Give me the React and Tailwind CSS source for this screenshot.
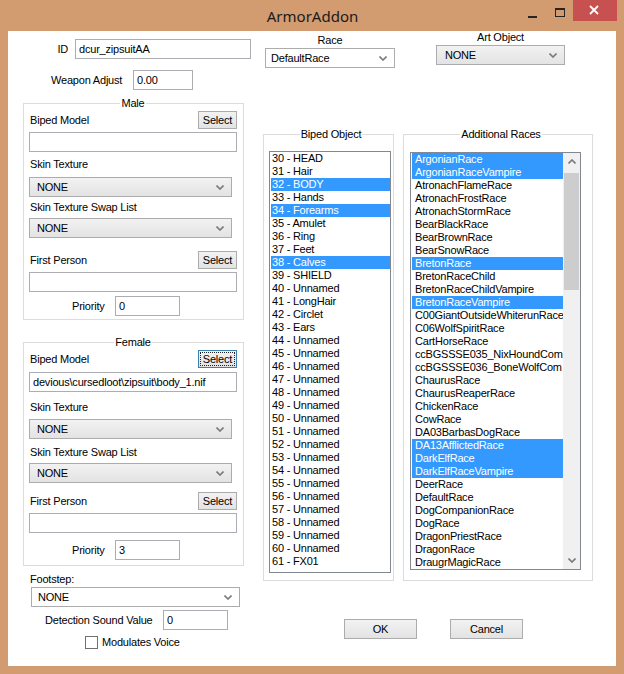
import React from 'react';

const FONT = "font-['Liberation_Sans',Arial,sans-serif] text-[11px] leading-[13px] tracking-[-0.2px] text-black";

const bipedItems = [
  '30 - HEAD', '31 - Hair', '32 - BODY', '33 - Hands', '34 - Forearms', '35 - Amulet',
  '36 - Ring', '37 - Feet', '38 - Calves', '39 - SHIELD', '40 - Unnamed', '41 - LongHair',
  '42 - Circlet', '43 - Ears',
  ...Array.from({ length: 17 }, (_, i) => `${44 + i} - Unnamed`),
  '61 - FX01',
];
const bipedSelected = [2, 4, 8];

const races = [
  'ArgonianRace', 'ArgonianRaceVampire', 'AtronachFlameRace', 'AtronachFrostRace',
  'AtronachStormRace', 'BearBlackRace', 'BearBrownRace', 'BearSnowRace', 'BretonRace',
  'BretonRaceChild', 'BretonRaceChildVampire', 'BretonRaceVampire', 'C00GiantOutsideWhiterunRace',
  'C06WolfSpiritRace', 'CartHorseRace', 'ccBGSSSE035_NixHoundCom', 'ccBGSSSE036_BoneWolfCom',
  'ChaurusRace', 'ChaurusReaperRace', 'ChickenRace', 'CowRace', 'DA03BarbasDogRace',
  'DA13AfflictedRace', 'DarkElfRace', 'DarkElfRaceVampire', 'DeerRace', 'DefaultRace',
  'DogCompanionRace', 'DogRace', 'DragonPriestRace', 'DragonRace', 'DraugrMagicRace',
];
const racesSelected = [0, 1, 8, 11, 22, 23, 24];

const Chevron = ({ up = false }) => (
  <svg width="8" height="5" viewBox="0 0 8 5">
    <path d={up ? 'M0.5 4.5 L4 1 L7.5 4.5' : 'M0.5 0.5 L4 4 L7.5 0.5'} fill="none" stroke="#7a7a7a" strokeWidth="1.6" />
  </svg>
);

// minimize / maximize / close caption buttons
const CaptionButtons = () => (
  <svg width="96" height="21" viewBox="0 0 96 21" className="shrink-0">
    <rect x="7" y="16" width="9" height="2" fill="#252525" />
    <rect x="34.5" y="8.5" width="9" height="8" fill="none" stroke="#252525" strokeWidth="1" />
    <rect x="34" y="8" width="10" height="2" fill="#252525" />
    <rect x="52" y="0" width="44" height="21" fill="#c75050" />
    <path d="M69 6 L77 14 M77 6 L69 14" stroke="#ffffff" strokeWidth="1.8" />
  </svg>
);

const WinButton = ({ label, className = '', focused = false }) => (
  <div
    className={`flex items-center justify-center border bg-linear-to-b from-[#f2f2f2] to-[#e3e3e3] ${
      focused ? 'border-[#3c7fb1]' : 'border-[#acacac]'
    } ${className}`}
  >
    {focused ? (
      <span className="flex flex-1 self-stretch items-center justify-center m-[1px] border border-dotted border-[#222]">
        {label}
      </span>
    ) : (
      label
    )}
  </div>
);

const TextBox = ({ value = '', className = '' }) => (
  <div className={`flex items-center h-[20px] border border-[#abadb3] bg-white px-[3px] overflow-hidden whitespace-nowrap ${className}`}>
    {value}
  </div>
);

const Combo = ({ value, className = '', white = false }) => (
  <div
    className={`flex items-center justify-between border border-[#acacac] ${
      white ? 'bg-white' : 'bg-linear-to-b from-[#f2f2f2] to-[#e3e3e3]'
    } ${className}`}
  >
    <span>{value}</span>
    <span className="mr-[7px] flex">
      <Chevron />
    </span>
  </div>
);

// male / female share the layout, only the spacing differs a little
const GenderBox = ({ title, model = '', priority, focused = false, gaps, className = '' }) => (
  <fieldset className={`w-[221px] border border-[#dcdcdc] pl-[5px] pr-[6px] ${gaps.pb} ${className}`}>
    <legend className="mx-auto px-[1px]">{title}</legend>
    <div className="flex items-center justify-between h-[18px] mt-[1px]">
      <span className="pl-[1px]">Biped Model</span>
      <WinButton label="Select" focused={focused} className="w-[39px] h-[18px]" />
    </div>
    <TextBox value={model} className={gaps.input} />
    <div className={`pl-[1px] ${gaps.skinLabel}`}>Skin Texture</div>
    <Combo value="NONE" className={`w-[203px] h-[20px] pl-[7px] ${gaps.skinSelect}`} />
    <div className={`pl-[1px] ${gaps.swapLabel}`}>Skin Texture Swap List</div>
    <Combo value="NONE" className={`w-[203px] h-[20px] pl-[7px] ${gaps.swapSelect}`} />
    <div className={`flex items-center justify-between h-[18px] ${gaps.fp}`}>
      <span className="pl-[1px]">First Person</span>
      <WinButton label="Select" className="w-[39px] h-[18px]" />
    </div>
    <TextBox className="mt-[3px]" />
    <div className={`flex items-center h-[20px] ${gaps.priority}`}>
      <span className="ml-[43px] w-[43px]">Priority</span>
      <TextBox value={priority} className="w-[65px]" />
    </div>
  </fieldset>
);

const ListBox = ({ items, selected, className = '', itemPad = 'pl-[1px]', scroll = false }) => (
  <div className={`flex border border-[#828790] bg-white overflow-hidden ${className}`}>
    <div className="flex-1 flex flex-col pl-[1px] overflow-hidden">
      {items.map((item, i) => (
        <div
          key={item}
          className={`h-[13px] shrink-0 whitespace-nowrap ${itemPad} ${
            selected.includes(i) ? 'bg-[#3399ff] text-white' : ''
          }`}
        >
          {item}
        </div>
      ))}
    </div>
    {scroll && (
      <div className="w-[17px] shrink-0 flex flex-col bg-[#f0f0f0]">
        <div className="h-[17px] flex items-center justify-center">
          <Chevron up />
        </div>
        <div className="mt-[3px] mx-[1px] h-[117px] bg-[#cdcdcd]" />
        <div className="flex-1" />
        <div className="h-[17px] flex items-center justify-center">
          <Chevron />
        </div>
      </div>
    )}
  </div>
);

export default function App() {
  return (
    <div className={`w-[624px] h-[674px] bg-[#d29b70] flex flex-col ${FONT}`}>
      {/* title bar */}
      <div className="h-[31px] shrink-0 flex items-start">
        <div className="flex-1 flex justify-center pl-[104px]">
          <span className="font-['Noto_Sans',sans-serif] text-[15px] leading-[20px] tracking-normal pt-[6px] text-[#1a1a1a]">
            ArmorAddon
          </span>
        </div>
        <div className="pr-[7px]">
          <CaptionButtons />
        </div>
      </div>

      {/* client area */}
      <div className="mx-[8px] h-[635px] bg-white flex">
        {/* left column */}
        <div className="w-[255px] shrink-0 flex flex-col">
          <div className="flex items-center h-[20px] mt-[8px]">
            <span className="w-[60px] text-right">ID</span>
            <TextBox value="dcur_zipsuitAA" className="ml-[7px] w-[176px]" />
          </div>
          <div className="flex items-center h-[20px] mt-[11px]">
            <span className="ml-[43px] w-[82px]">Weapon Adjust</span>
            <TextBox value="0.00" className="w-[60px]" />
          </div>

          <GenderBox
            title="Male"
            className="ml-[15px] mt-[7px]"
            priority="0"
            gaps={{
              input: 'mt-[3px]', skinLabel: 'mt-[6px]', skinSelect: 'mt-[6px]', swapLabel: 'mt-[4px]',
              swapSelect: 'mt-[4px]', fp: 'mt-[13px]', priority: 'mt-[4px]', pb: 'pb-[3px]',
            }}
          />
          <GenderBox
            title="Female"
            className="ml-[15px] mt-[16px]"
            model="devious\cursedloot\zipsuit\body_1.nif"
            priority="3"
            focused
            gaps={{
              input: 'mt-[4px]', skinLabel: 'mt-[9px]', skinSelect: 'mt-[5px]', swapLabel: 'mt-[7px]',
              swapSelect: 'mt-[4px]', fp: 'mt-[9px]', priority: 'mt-[7px]', pb: 'pb-[5px]',
            }}
          />

          <div className="ml-[22px] mt-[7px]">Footstep:</div>
          <Combo value="NONE" white className="ml-[23px] mt-[1px] w-[209px] h-[20px] pl-[6px]" />
          <div className="flex items-center h-[20px] mt-[3px]">
            <span className="ml-[37px] w-[118px]">Detection Sound Value</span>
            <TextBox value="0" className="w-[65px]" />
          </div>
          <div className="flex items-center h-[13px] mt-[6px]">
            <div className="ml-[77px] w-[13px] h-[13px] border border-[#707070] bg-white" />
            <span className="ml-[4px]">Modulates Voice</span>
          </div>
        </div>

        {/* right side */}
        <div className="flex flex-col">
          <div className="flex items-start">
            <div className="ml-[2px] w-[130px] flex flex-col items-center">
              <div className="mt-[3px]">Race</div>
              <Combo value="DefaultRace" white className="mt-[1px] w-full h-[20px] pl-[5px]" />
            </div>
            <div className="ml-[41px] w-[129px] flex flex-col items-center">
              <div>Art Object</div>
              <Combo value="NONE" className="mt-[1px] w-full h-[20px] pl-[8px]" />
            </div>
          </div>

          <div className="flex items-start mt-[60px]">
            <fieldset className="w-[131px] border border-[#dcdcdc] pl-[5px] pb-[7px]">
              <legend className="mx-auto px-[1px]">Biped Object</legend>
              <ListBox items={bipedItems} selected={bipedSelected} className="mt-[10px] w-[122px] h-[422px]" />
            </fieldset>
            <fieldset className="ml-[9px] w-[190px] border border-[#dcdcdc] pl-[6px] pb-[10px]">
              <legend className="mx-auto px-[1px]">Additional Races</legend>
              <ListBox
                items={races}
                selected={racesSelected}
                itemPad="pl-[3px]"
                scroll
                className="mt-[11px] w-[171px] h-[418px]"
              />
            </fieldset>
          </div>

          <div className="flex mt-[38px]">
            <WinButton label="OK" className="ml-[81px] w-[73px] h-[20px]" />
            <WinButton label="Cancel" className="ml-[33px] w-[73px] h-[20px]" />
          </div>
        </div>
      </div>
    </div>
  );
}
